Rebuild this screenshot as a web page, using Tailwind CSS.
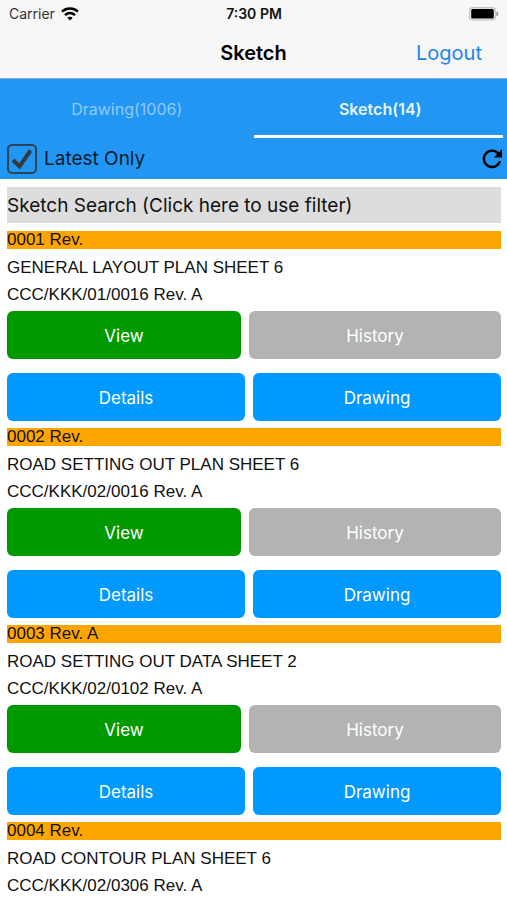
<!DOCTYPE html>
<html lang="en">
<head>
<meta charset="utf-8">
<meta name="viewport" content="width=device-width, initial-scale=1">
<title>Sketch</title>
<script src="https://cdn.jsdelivr.net/npm/@tailwindcss/browser@4"></script>
</head>
<body class="h-screen overflow-hidden bg-white font-['Inter',sans-serif] text-[#111111]">
<div class="flex h-full flex-col">
  <header class="shrink-0 border-b border-[#8cabc8] bg-[#f7f7f7]">
    <div class="grid h-7 grid-cols-3 items-center pr-2 pl-[9px] text-sm">
      <div class="flex items-center gap-[6px] text-[#333333]">
        <span>Carrier</span>
        <svg class="h-[14px] w-[18px]" viewBox="0 0 18 14" fill="none" stroke="#000" stroke-width="2.6" aria-hidden="true">
          <path d="M1 4.6C5.4 .5 12.6 .5 17 4.6"/>
          <path d="M4 8.1C6.9 5.4 11.1 5.4 14 8.1"/>
          <path d="M6.3 10.8C7.8 9.3 10.2 9.3 11.7 10.8L9 13.6Z" fill="#000" stroke="none"/>
        </svg>
      </div>
      <span class="text-center font-semibold">7:30 PM</span>
      <svg class="h-[14px] w-[32px] justify-self-end" viewBox="0 0 32 14" aria-hidden="true">
        <rect x="2" y=".1" width="27" height="13.4" rx="4" fill="#c4c4c4"/>
        <rect x="3.4" y="1.4" width="24.2" height="10.8" rx="2.6" fill="#f7f7f7"/>
        <rect x="4.2" y="2" width="22.6" height="9.6" rx="1.6" fill="#000"/>
        <path d="M29.4 4.2C32 5.4 32 8.4 29.4 9.6Z" fill="#999"/>
      </svg>
    </div>
    <div class="grid h-[50px] grid-cols-3 items-center px-[25px]">
      <h1 class="col-start-2 text-center text-xl font-semibold text-black">Sketch</h1>
      <button type="button" class="justify-self-end text-xl text-[#2384ee]">Logout</button>
    </div>
  </header>

  <div class="shrink-0 bg-[#2196f3]">
    <div class="grid h-[59px] grid-cols-2 text-base" role="tablist">
      <button type="button" role="tab" aria-selected="false" class="border-b-3 border-transparent pt-[3px] text-[#90caf9]">Drawing(1006)</button>
      <button type="button" role="tab" aria-selected="true" class="mr-1 border-b-3 border-white pt-[3px] pl-1 font-semibold text-[#e6f5ff]">Sketch(14)</button>
    </div>
    <div class="flex h-[41px] items-center justify-between pr-1 pl-[7px]">
      <label class="flex items-center gap-[7px] text-[19px] text-[#0a1c30]">
        <span class="grid">
          <input type="checkbox" checked class="peer col-start-1 row-start-1 size-[30px] appearance-none rounded-[5px] border-2 border-[#2c4256]">
          <svg class="pointer-events-none invisible col-start-1 row-start-1 size-[30px] peer-checked:visible" viewBox="0 0 30 30" fill="none" stroke="#333b42" stroke-width="4" aria-hidden="true"><path d="M6 16L12.5 22.5L23.5 6.5"/></svg>
        </span>
        <span class="pt-[2px]">Latest Only</span>
      </label>
      <button type="button" aria-label="Refresh">
        <svg class="size-[22px]" viewBox="0 0 22 22" aria-hidden="true">
          <path d="M17.4 5.6A8.2 8.2 0 1 0 19 13" fill="none" stroke="#000" stroke-width="2.4"/>
          <path d="M21 1V9.4H12.8Z" fill="#000"/>
        </svg>
      </button>
    </div>
  </div>

  <main class="min-h-0 flex-1 overflow-y-auto pt-2 pr-[6px] pl-[7px] [scrollbar-width:none]">
    <button type="button" class="mb-2 block h-9 w-full bg-[#dddddd] pt-[2px] text-left text-[19px]">Sketch Search (Click here to use filter)</button>

    <article class="mb-[7px]">
      <h2 class="mb-[5px] bg-[#ffa500] font-['Liberation_Sans',sans-serif] text-[17px] leading-[18px]">0001 Rev.</h2>
      <p class="font-['Liberation_Sans',sans-serif] text-[17px] leading-[27px]">GENERAL LAYOUT PLAN SHEET 6</p>
      <p class="font-['Liberation_Sans',sans-serif] text-[17px] leading-[27px]">CCC/KKK/01/0016 Rev. A</p>
      <div class="mt-[3px] grid grid-cols-[234fr_252fr] gap-2 text-[17px] text-white">
        <button type="button" class="h-12 rounded-md bg-[#009900] pt-[3px]">View</button>
        <button type="button" class="h-12 rounded-md bg-[#b3b3b3] pt-[3px]">History</button>
      </div>
      <div class="mt-[14px] grid grid-cols-[238fr_248fr] gap-2 text-[17px] text-white">
        <button type="button" class="h-12 rounded-md bg-[#0099ff] pt-[3px]">Details</button>
        <button type="button" class="h-12 rounded-md bg-[#0099ff] pt-[3px]">Drawing</button>
      </div>
    </article>

    <article class="mb-[7px]">
      <h2 class="mb-[5px] bg-[#ffa500] font-['Liberation_Sans',sans-serif] text-[17px] leading-[18px]">0002 Rev.</h2>
      <p class="font-['Liberation_Sans',sans-serif] text-[17px] leading-[27px]">ROAD SETTING OUT PLAN SHEET 6</p>
      <p class="font-['Liberation_Sans',sans-serif] text-[17px] leading-[27px]">CCC/KKK/02/0016 Rev. A</p>
      <div class="mt-[3px] grid grid-cols-[234fr_252fr] gap-2 text-[17px] text-white">
        <button type="button" class="h-12 rounded-md bg-[#009900] pt-[3px]">View</button>
        <button type="button" class="h-12 rounded-md bg-[#b3b3b3] pt-[3px]">History</button>
      </div>
      <div class="mt-[14px] grid grid-cols-[238fr_248fr] gap-2 text-[17px] text-white">
        <button type="button" class="h-12 rounded-md bg-[#0099ff] pt-[3px]">Details</button>
        <button type="button" class="h-12 rounded-md bg-[#0099ff] pt-[3px]">Drawing</button>
      </div>
    </article>

    <article class="mb-[7px]">
      <h2 class="mb-[5px] bg-[#ffa500] font-['Liberation_Sans',sans-serif] text-[17px] leading-[18px]">0003 Rev. A</h2>
      <p class="font-['Liberation_Sans',sans-serif] text-[17px] leading-[27px]">ROAD SETTING OUT DATA SHEET 2</p>
      <p class="font-['Liberation_Sans',sans-serif] text-[17px] leading-[27px]">CCC/KKK/02/0102 Rev. A</p>
      <div class="mt-[3px] grid grid-cols-[234fr_252fr] gap-2 text-[17px] text-white">
        <button type="button" class="h-12 rounded-md bg-[#009900] pt-[3px]">View</button>
        <button type="button" class="h-12 rounded-md bg-[#b3b3b3] pt-[3px]">History</button>
      </div>
      <div class="mt-[14px] grid grid-cols-[238fr_248fr] gap-2 text-[17px] text-white">
        <button type="button" class="h-12 rounded-md bg-[#0099ff] pt-[3px]">Details</button>
        <button type="button" class="h-12 rounded-md bg-[#0099ff] pt-[3px]">Drawing</button>
      </div>
    </article>

    <article>
      <h2 class="mb-[5px] bg-[#ffa500] font-['Liberation_Sans',sans-serif] text-[17px] leading-[18px]">0004 Rev.</h2>
      <p class="font-['Liberation_Sans',sans-serif] text-[17px] leading-[27px]">ROAD CONTOUR PLAN SHEET 6</p>
      <p class="font-['Liberation_Sans',sans-serif] text-[17px] leading-[27px]">CCC/KKK/02/0306 Rev. A</p>
    </article>
  </main>
</div>
</body>
</html>
